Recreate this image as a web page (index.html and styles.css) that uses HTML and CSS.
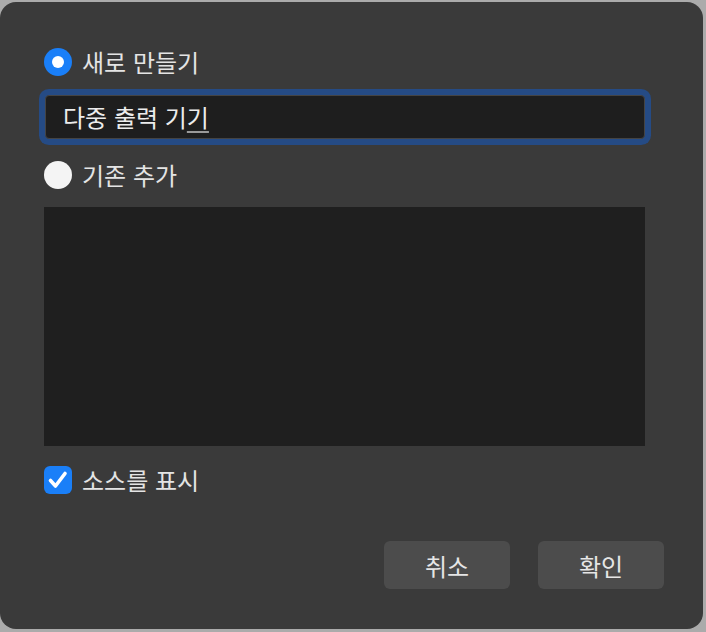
FILE: index.html
```html
<!DOCTYPE html>
<html lang="ko">
<head>
<meta charset="utf-8">
<link rel="stylesheet" href="styles.css">
</head>
<body>
<div class="dialog">
  <label class="option">
    <span class="radio radio-on"><span class="dot"></span></span>
    <span class="label">새로 만들기</span>
  </label>
  <div class="field"><span class="field-text">다중 출력 기<span class="composing">기</span></span></div>
  <label class="option option-second">
    <span class="radio radio-off"></span>
    <span class="label">기존 추가</span>
  </label>
  <div class="listbox"></div>
  <label class="option option-check">
    <span class="checkbox">
      <svg width="22" height="22" viewBox="0 0 22 22"><path d="M3.5 11.5 L8.5 17 L18 4.5" fill="none" stroke="#fff" stroke-width="3.6" stroke-linecap="round" stroke-linejoin="round"/></svg>
    </span>
    <span class="label">소스를 표시</span>
  </label>
  <div class="buttons">
    <button class="btn">취소</button>
    <button class="btn">확인</button>
  </div>
</div>
</body>
</html>
```
FILE: styles.css
```css
html, body {
  margin: 0;
  padding: 0;
}
body {
  width: 706px;
  height: 632px;
  background: #ababab;
  font-family: "Noto Sans CJK KR", "Noto Sans", sans-serif;
  overflow: hidden;
}
.dialog {
  box-sizing: border-box;
  margin-top: 2px;
  width: 703px;
  height: 627px;
  background: #3a3a3a;
  border-radius: 16px;
  padding: 46px 58px 0 44px;
  display: flex;
  flex-direction: column;
  color: #e4e4e4;
}
.option {
  display: flex;
  align-items: center;
  height: 28px;
  gap: 10px;
}
.label {
  font-size: 24px;
  line-height: 28px;
  color: #e4e4e4;
}
.radio {
  box-sizing: border-box;
  width: 28px;
  height: 28px;
  border-radius: 50%;
  display: flex;
  align-items: center;
  justify-content: center;
  flex: none;
}
.radio-on {
  background: #1a7ff8;
}
.dot {
  width: 12px;
  height: 12px;
  border-radius: 50%;
  background: #fff;
}
.radio-off {
  background: #f4f4f4;
}
.field {
  box-sizing: border-box;
  margin-top: 19px;
  margin-left: 1px;
  width: 600px;
  height: 44px;
  background: #1e1e1e;
  border: 1px solid #444;
  border-radius: 4px;
  box-shadow: 0 0 0 6px #254b85;
  display: flex;
  align-items: center;
  padding-left: 17px;
}
.field-text {
  font-size: 24px;
  color: #ececec;
  line-height: 28px;
}
.composing {
  text-decoration: underline;
  text-decoration-color: #9a9a9a;
  text-underline-offset: 4px;
}
.option-second {
  margin-top: 22px;
}
.listbox {
  margin-top: 18px;
  width: 601px;
  height: 239px;
  background: #1f1f1f;
}
.option-check {
  margin-top: 20px;
}
.checkbox {
  width: 28px;
  height: 28px;
  border-radius: 6px;
  background: #1a7ff8;
  display: flex;
  align-items: center;
  justify-content: center;
  flex: none;
}
.buttons {
  margin-top: 47px;
  margin-right: -19px;
  display: flex;
  justify-content: flex-end;
  gap: 28px;
}
.btn {
  width: 126px;
  height: 48px;
  border: none;
  border-radius: 6px;
  background: #4c4c4c;
  color: #e6e6e6;
  font-family: inherit;
  font-size: 24px;
  padding: 0;
}
```
